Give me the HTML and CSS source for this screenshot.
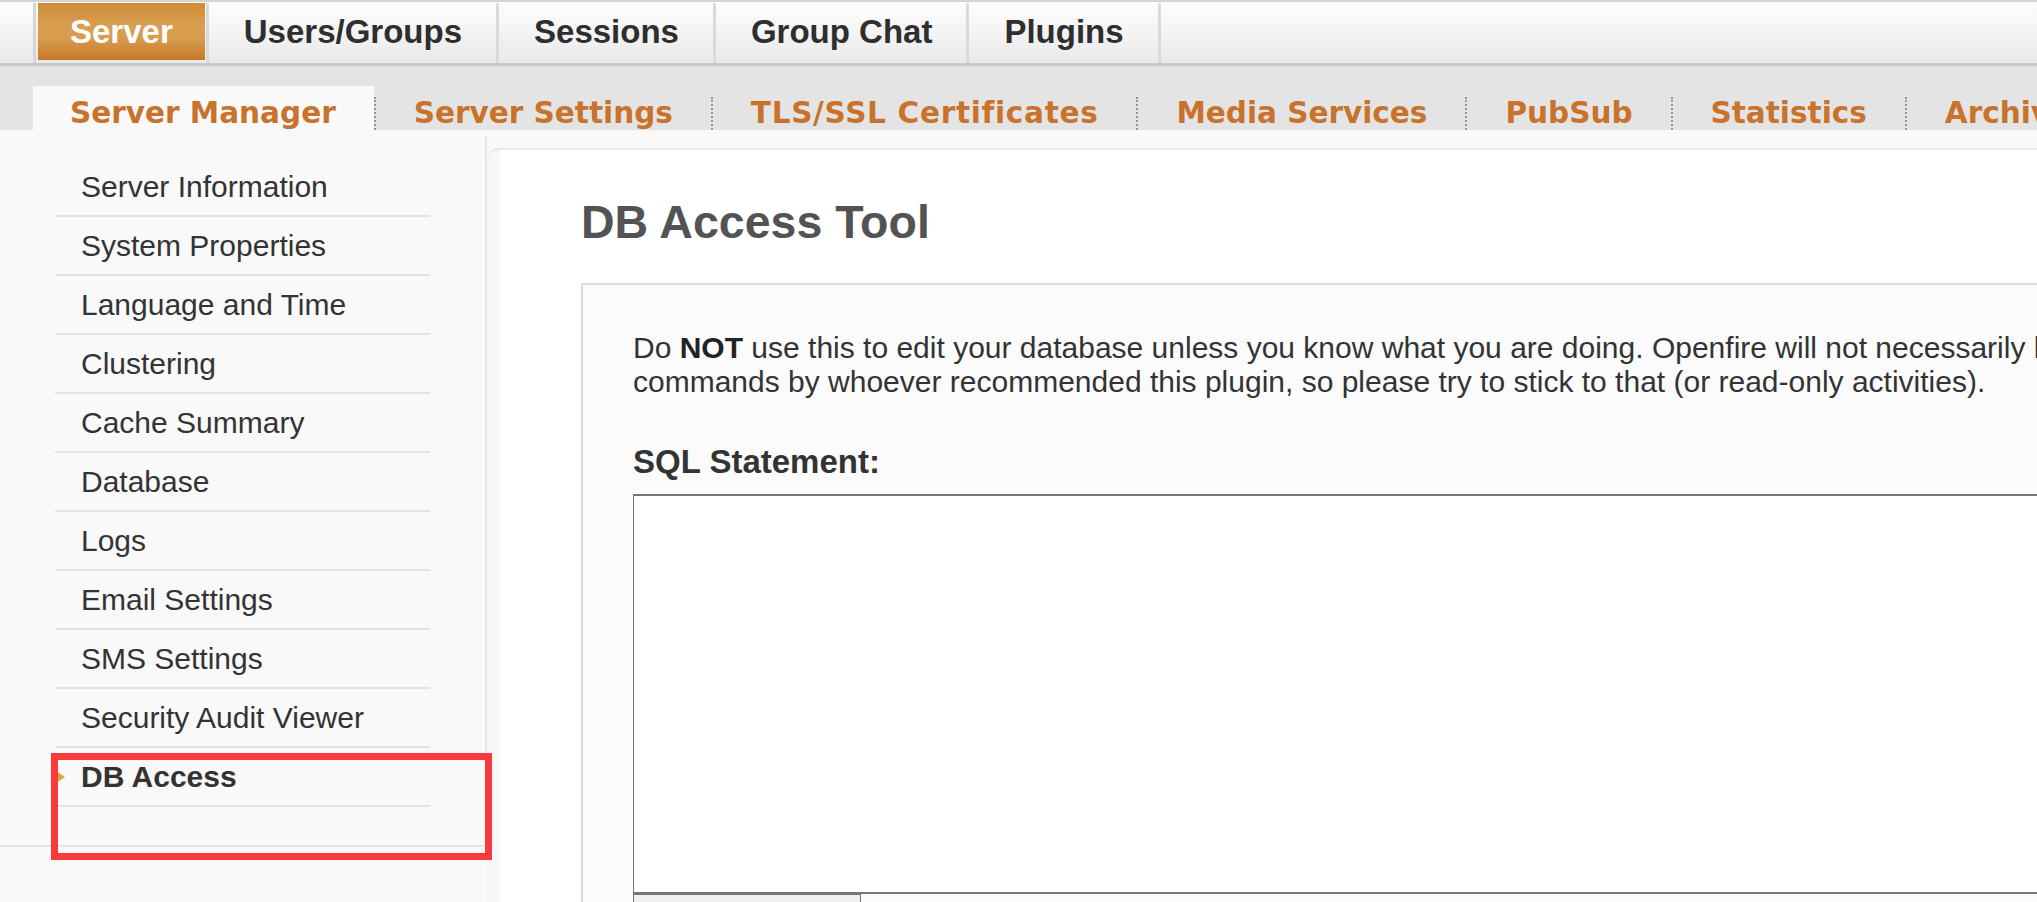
FILE: index.html
```html
<!DOCTYPE html>
<html lang="en">
<head>
<meta charset="utf-8">
<title>DB Access Tool</title>
<link rel="stylesheet" href="styles.css">
</head>
<body>
<div class="page">
  <header class="topbar">
    <ul class="tabs">
      <li class="tab active"><a>Server</a></li>
      <li class="tab"><a>Users/Groups</a></li>
      <li class="tab"><a>Sessions</a></li>
      <li class="tab"><a>Group Chat</a></li>
      <li class="tab"><a>Plugins</a></li>
    </ul>
  </header>
  <nav class="subbar">
    <ul class="subtabs">
      <li class="active"><a>Server Manager</a></li>
      <li><a>Server Settings</a></li>
      <li><a class="wide">TLS/SSL Certificates</a></li>
      <li><a>Media Services</a></li>
      <li><a>PubSub</a></li>
      <li><a>Statistics</a></li>
      <li><a>Archiving</a></li>
    </ul>
  </nav>
  <div class="body">
    <aside class="sidecol">
      <div class="sidebar">
        <ul class="sidenav">
          <li><a>Server Information</a></li>
          <li><a>System Properties</a></li>
          <li><a>Language and Time</a></li>
          <li><a>Clustering</a></li>
          <li><a>Cache Summary</a></li>
          <li><a>Database</a></li>
          <li><a>Logs</a></li>
          <li><a>Email Settings</a></li>
          <li><a>SMS Settings</a></li>
          <li><a>Security Audit Viewer</a></li>
          <li class="current"><a>DB Access</a></li>
        </ul>
      </div>
      <div class="annot"></div>
    </aside>
    <main class="main">
      <h1 class="title">DB Access Tool</h1>
      <div class="box">
        <p class="warn">Do <b>NOT</b> use this to edit your database unless you know what you are doing. Openfire will not necessarily be able to recover from that. Only follow exact<br>commands by whoever recommended this plugin, so please try to stick to that (or read-only activities).</p>
        <label class="sql-label" for="sql">SQL Statement:</label>
        <textarea id="sql" class="sql"></textarea>
        <button class="exec" type="button">Execute</button>
      </div>
    </main>
  </div>
</div>
</body>
</html>
```

FILE: styles.css
```css
html, body {
  margin: 0;
  padding: 0;
}
body {
  overflow: hidden;
  background: #f9f9f9;
  font-family: "Liberation Sans", Arial, sans-serif;
  color: #333;
}
.page {
  width: 2300px;
}

/* ---------- top tabs ---------- */
.topbar {
  height: 61px;
  border-top: 2px solid #d4d4d4;
  border-bottom: 3px solid #c9c9c9;
  background: linear-gradient(#fefefe, #e9e9e9);
}
.tabs {
  display: flex;
  list-style: none;
  margin: 1px 0 0 33px;
  padding: 0;
}
.tab {
  height: 60px;
  border-right: 3px solid #dadada;
}
.tab:first-child {
  border-left: 3px solid #d6d6d6;
}
.tab a {
  display: block;
  height: 57px;
  margin: 0 1px 0 2px;
  padding: 0 33px;
  line-height: 57px;
  font-size: 33px;
  font-weight: bold;
  color: #2e2e2e;
  white-space: nowrap;
}
.tab.active a {
  padding: 0 32px;
  color: #fff;
  background: linear-gradient(#d08b34 0%, #d89f52 40%, #d79c4e 62%, #c6782a 100%);
}

/* ---------- sub tabs ---------- */
.subbar {
  height: 64px;
  background: #e4e4e4;
}
.subtabs {
  display: flex;
  align-items: flex-end;
  height: 100%;
  list-style: none;
  margin: 0;
  padding: 0 0 0 33px;
  white-space: nowrap;
}
.subtabs a {
  display: block;
  padding: 0 38px;
  line-height: 33px;
  font-family: "DejaVu Sans", Verdana, sans-serif;
  font-size: 29.5px;
  font-weight: bold;
  color: #c8722c;
}
.subtabs a.wide {
  letter-spacing: 0.7px;
}
.subtabs li + li a {
  border-left: 2px dotted #8797a6;
}
.subtabs li.active a {
  padding: 11px 38px 0 37px;
  background: #f9f9f9;
}

/* ---------- body ---------- */
.body {
  display: flex;
  height: 772px;
  background: #f9f9f9;
}
.sidecol {
  position: relative;
  flex: 0 0 487px;
}
.sidebar {
  margin-top: 7px;
  padding: 21px 0 38px;
  border-right: 2px solid #e5e5e5;
  border-bottom: 2px solid #e5e5e5;
}
.sidenav {
  list-style: none;
  margin: 0 0 0 55px;
  padding: 0;
  width: 375px;
}
.sidenav li {
  position: relative;
  border-bottom: 2px solid #e4e4e4;
}
.sidenav a {
  display: block;
  padding: 11px 0 11px 26px;
  line-height: 35px;
  font-size: 30px;
  color: #333;
  white-space: nowrap;
}
.sidenav li.current a {
  font-weight: bold;
}
.sidenav li.current::before {
  content: "";
  position: absolute;
  left: 1px;
  top: 23px;
  border-left: 9px solid #dca433;
  border-top: 6px solid transparent;
  border-bottom: 6px solid transparent;
}
.annot {
  position: absolute;
  left: 51px;
  top: 623px;
  width: 427px;
  height: 93px;
  border: 7px solid #f93a3b;
  z-index: 2;
}

/* ---------- main ---------- */
.main {
  flex: 1;
  margin-top: 18px;
  padding: 46px 203px 0 94px;
  border-top: 2px solid #e7e7e7;
  border-top-left-radius: 12px;
  background: linear-gradient(to right, #f7f7f7 13px, #ffffff 13px);
}
.title {
  margin: 0;
  font-size: 46.5px;
  line-height: 53px;
  font-weight: bold;
  color: #535353;
}
.box {
  margin-top: 34px;
  padding: 46px 50px 0;
  border: 2px solid #dcdcdc;
  background: #fbfbfb;
}
.warn {
  margin: 0;
  font-size: 30px;
  line-height: 34px;
  white-space: nowrap;
  color: #333;
}
.warn b {
  color: #222;
}
.sql-label {
  display: block;
  margin-top: 44px;
  font-size: 33px;
  line-height: 38px;
  font-weight: bold;
  color: #333;
}
.sql {
  display: block;
  box-sizing: border-box;
  width: 100%;
  height: 400px;
  margin: 13px 0 0;
  border: 1px solid #767676;
  border-top-width: 2px;
  border-bottom-width: 2px;
  background: #fff;
}
.exec {
  display: block;
  width: 228px;
  height: 44px;
  border: 1px solid #767676;
  background: #efefef;
  font-family: "Liberation Sans", Arial, sans-serif;
  font-size: 28px;
}
```
